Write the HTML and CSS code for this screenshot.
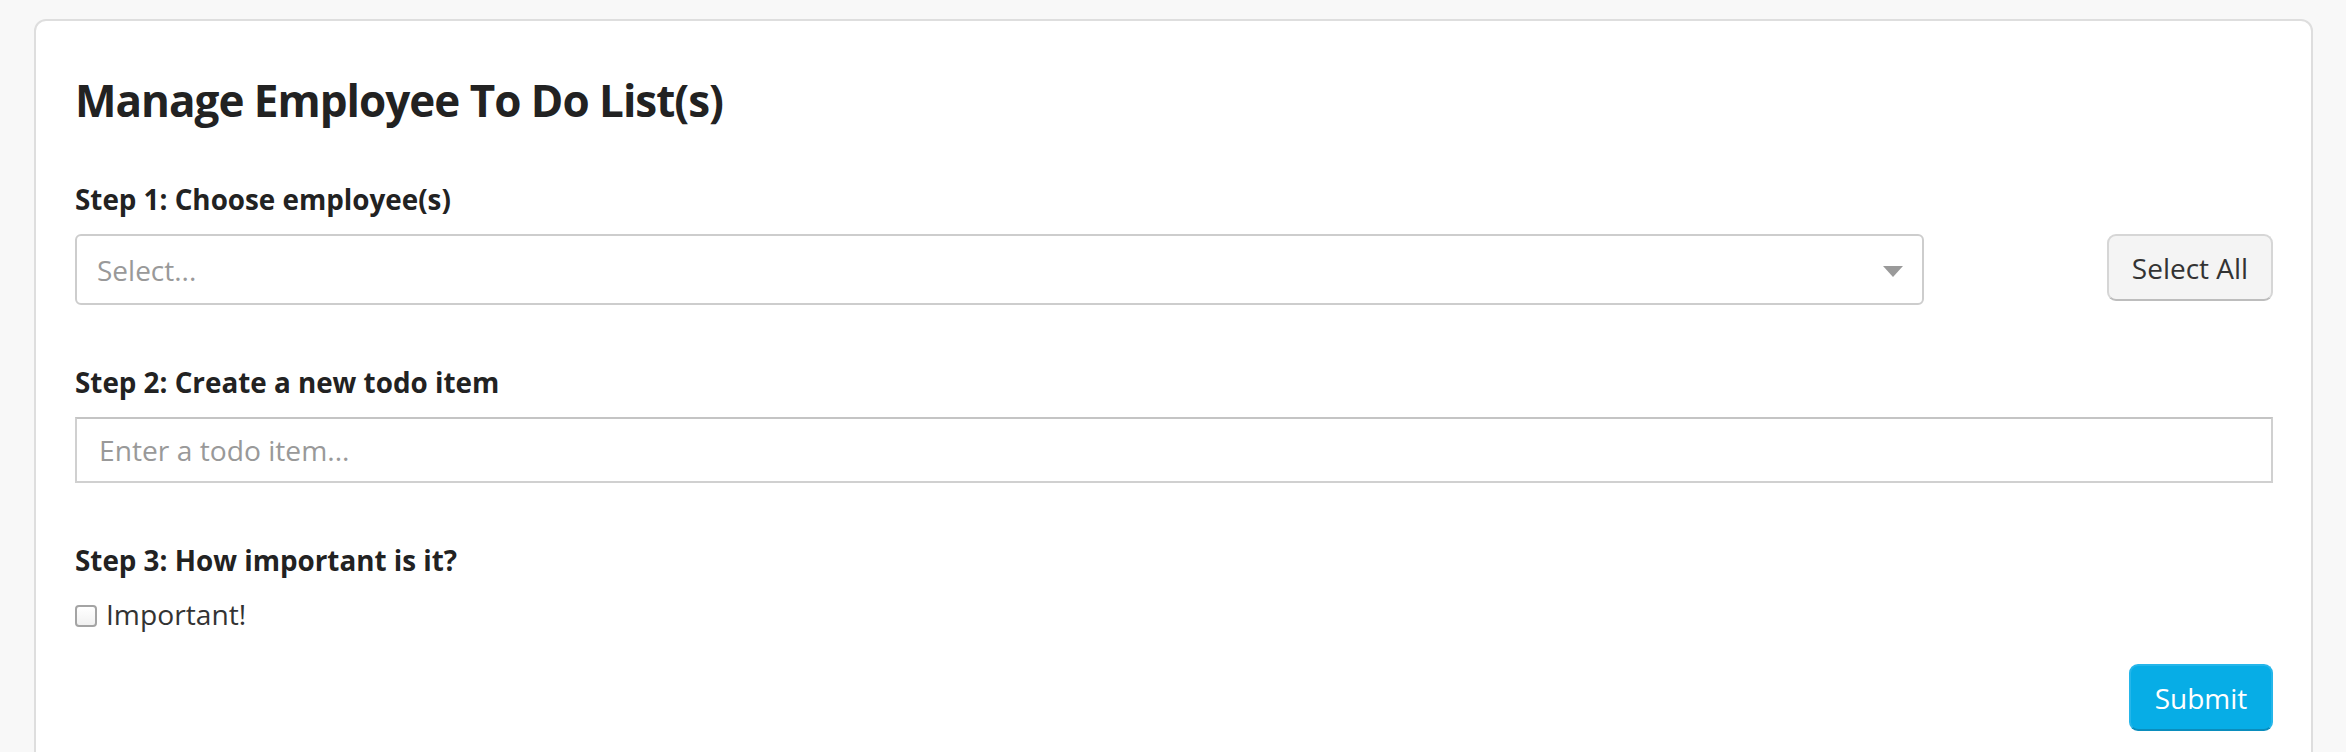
FILE: index.html
```html
<!DOCTYPE html>
<html lang="en">
<head>
<meta charset="utf-8">
<title>Manage Employee To Do List(s)</title>
<link rel="stylesheet" href="styles.css">
</head>
<body>
<div class="card">
  <h1 class="title">Manage Employee To Do List(s)</h1>

  <div class="group">
    <div class="step-label">Step 1: Choose employee(s)</div>
    <div class="employee-row">
      <div class="select-box">
        <span class="select-placeholder">Select...</span>
        <span class="select-arrow"></span>
      </div>
      <button class="btn btn-default" type="button">Select All</button>
    </div>
  </div>

  <div class="group">
    <div class="step-label">Step 2: Create a new todo item</div>
    <input class="text-input" type="text" placeholder="Enter a todo item...">
  </div>

  <div class="group">
    <div class="step-label">Step 3: How important is it?</div>
    <label class="check-row">
      <input class="check" type="checkbox">
      <span>Important!</span>
    </label>
  </div>

  <div class="actions">
    <button class="btn btn-primary" type="submit">Submit</button>
  </div>
</div>
</body>
</html>
```

FILE: styles.css
```css
html, body {
  margin: 0;
  padding: 0;
}

body {
  background: #f8f8f8;
  font-family: "Open Sans", "Noto Sans", sans-serif;
  color: #222;
  overflow: hidden;
}

.card {
  margin: 19px 33px 0 34px;
  background: #fff;
  border: 2px solid #dedede;
  border-radius: 12px;
  padding: 54px 38px 60px 39px;
}

.title {
  margin: 0 0 55px 0;
  font-size: 44px;
  line-height: 50px;
  font-weight: 700;
  letter-spacing: -1px;
  color: #222;
}

.group + .group {
  margin-top: 58px;
}

.step-label {
  font-size: 27.8px;
  line-height: 38px;
  font-weight: 700;
  color: #222;
  margin-bottom: 16px;
}

.employee-row {
  display: grid;
  grid-template-columns: 1fr 166px;
  column-gap: 183px;
  align-items: start;
}

.select-box {
  box-sizing: border-box;
  height: 71px;
  border: 2px solid #cdcdcd;
  border-radius: 6px;
  display: flex;
  align-items: center;
  justify-content: space-between;
  padding: 0 19px 0 20px;
}

.select-placeholder {
  font-size: 28px;
  color: #999;
}

.select-arrow {
  width: 0;
  height: 0;
  border-left: 10px solid transparent;
  border-right: 10px solid transparent;
  border-top: 11px solid #9a9a9a;
  margin-top: 3px;
}

.btn {
  box-sizing: border-box;
  height: 67px;
  font-family: "Open Sans", "Noto Sans", sans-serif;
  font-size: 28px;
  line-height: 1;
  border-radius: 9px;
  padding: 0 20px;
  cursor: pointer;
}

.btn-default {
  width: 166px;
  background: #f4f4f4;
  color: #333;
  border: 2px solid #d6d6d6;
  border-bottom-color: #bdbdbd;
}

.text-input {
  display: block;
  box-sizing: border-box;
  width: 100%;
  height: 66px;
  margin: 0;
  border: 2px solid #d0d0d0;
  border-top-color: #c4c4c4;
  border-radius: 0;
  padding: 0 22px;
  font-family: "Open Sans", "Noto Sans", sans-serif;
  font-size: 28.2px;
  color: #333;
  background: #fff;
  outline: none;
}

.text-input::placeholder {
  color: #999;
}

.check-row {
  display: flex;
  align-items: center;
  gap: 9px;
  font-size: 28.2px;
  line-height: 38px;
  color: #333;
}

.check {
  appearance: none;
  -webkit-appearance: none;
  box-sizing: border-box;
  width: 22px;
  height: 22px;
  margin: 4px 0 0 0;
  border: 2px solid #a4a4a4;
  border-radius: 4px;
  background: linear-gradient(#fff, #f1f1f1);
}

.actions {
  display: flex;
  justify-content: flex-end;
  margin-top: 31px;
}

.btn-primary {
  width: 144px;
  background: #07ade6;
  color: #fff;
  border: 2px solid #25b6ea;
  border-bottom-color: #0a8dbd;
}
```
